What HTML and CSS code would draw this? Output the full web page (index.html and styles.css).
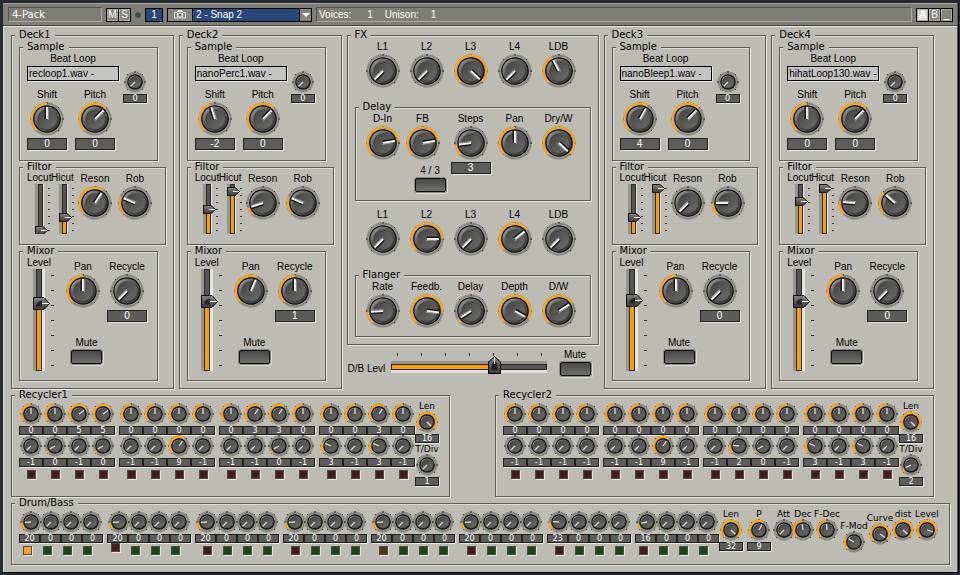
FILE: index.html
```
<!DOCTYPE html>
<html lang="en">
<head>
  <meta charset="UTF-8" />
  <meta name="viewport" content="width=device-width, initial-scale=1.0" />
  <title>4-Pack</title>
  <link rel="stylesheet" href="styles.css">
</head>
<body>
  <svg class="defs" aria-hidden="true">
    <defs>
      <linearGradient id="rim" x1="0" y1="0" x2="1" y2="1">
        <stop offset="0" stop-color="#b4b4b0" />
        <stop offset="0.35" stop-color="#606060" />
        <stop offset="1" stop-color="#303030" />
      </linearGradient>
      <linearGradient id="face" x1="0" y1="0" x2="1" y2="1">
        <stop offset="0" stop-color="#424242" />
        <stop offset="1" stop-color="#6c6c6a" />
      </linearGradient>
      <linearGradient id="cap" x1="0" y1="0" x2="0" y2="1">
        <stop offset="0" stop-color="#84847f" />
        <stop offset="1" stop-color="#3a3a3a" />
      </linearGradient>
    </defs>
  </svg>

  <main class="window">
    <header class="titlebar">
      <h1 class="title">4-Pack</h1>
      <div class="keys">
        <button class="key" type="button">M</button>
        <button class="key" type="button">S</button>
      </div>
      <span class="lamp"></span>
      <button class="slot" type="button">1</button>
      <div class="snapshot">
        <button class="camera" type="button" aria-label="Snapshot">
          <svg width="14" height="9" viewBox="0 0 14 9">
            <path d="M1.5 2.5H4V1.5H10V2.5H12.5V8H1.5Z" fill="#85847d" stroke="#e6e6e0" />
            <path d="M5 0.5H9M4.5 3V7M9.5 3V7" stroke="#e6e6e0" />
            <circle cx="7" cy="5" r="2" fill="#67675f" stroke="#e6e6e0" />
          </svg>
        </button>
        <select class="snap" aria-label="Snapshot name">
          <option>2 - Snap 2</option>
        </select>
        <span class="arrow">
          <svg width="8" height="4" viewBox="0 0 8 4"><path d="M0 0H8L4 4Z" fill="#fff" /></svg>
        </span>
      </div>
      <p class="status"><span>Voices:</span><span>1</span><span>Unison:</span><span>1</span></p>
      <div class="keys">
        <button class="key on" type="button">A</button>
        <button class="key" type="button">B</button>
        <button class="key" type="button">_</button>
      </div>
    </header>

    <div class="panel">
      <div class="decks" id="decks">
        <div class="center" id="center">
          <fieldset class="fx">
            <legend>FX</legend>
            <div class="knobs" id="fxSendA"></div>
            <fieldset class="delay">
              <legend>Delay</legend>
              <div class="knobs delay-knobs" id="delay"></div>
            </fieldset>
            <div class="knobs second" id="fxSendB"></div>
            <fieldset class="flanger">
              <legend>Flanger</legend>
              <div class="knobs" id="flanger"></div>
            </fieldset>
          </fieldset>
          <div class="master">
            <label for="dbLevel">D/B Levl</label>
            <div class="crossfader">
              <svg width="158" height="24" viewBox="0 0 158 24">
                <path d="M7.5 1v3M31.5 1v3M55.5 1v3M79.5 1v3M103.5 1v3M127.5 1v3M151.5 1v3" stroke="#333" />
                <rect x="1" y="9" width="156" height="3" fill="#95958c" />
                <rect x="1" y="18" width="156" height="3" fill="#e2e2dc" />
                <rect x="1.5" y="12.5" width="155" height="5" fill="#555553" stroke="#222" />
                <rect x="2" y="13" width="98" height="4" fill="#ff9c00" />
                <path d="M98.5 21.5V10L104.500 4.5L110.500 10V21.5Z" fill="url(#cap)" stroke="#000" />
                <path d="M101 18Q101 11 104.500 9Q108 11 108 18Z" fill="#222" />
                <path d="M104.500 5V12" stroke="#fff" />
              </svg>
              <input type="range" id="dbLevel" value="65">
            </div>
            <div class="mute">
              <label for="dbMute">Mute</label>
              <button class="pad" id="dbMute" type="button" aria-label="Mute"></button>
            </div>
          </div>
        </div>
      </div>

      <div class="recyclers" id="recyclers"></div>

      <fieldset class="drum">
        <legend>Drum/Bass</legend>
        <div class="drum-body">
          <div class="steps" id="drumSteps"></div>
          <div class="voice" id="voice"></div>
        </div>
      </fieldset>
    </div>
  </main>

  <script src="script.js"></script>
</body>
</html>
```
FILE: styles.css
```
* { margin: 0; padding: 0; box-sizing: border-box; }
body {
  font-family: "Liberation Sans", Arial, sans-serif;
  font-size: 10px;
  line-height: 12px;
  color: #000;
  background: #262b31;
  padding: 3px 2px 3px 3px;
}
button, input, select {
  font: inherit;
  color: inherit;
}
svg { display: block; }
.defs {
  position: absolute;
  width: 0;
  height: 0;
}
.window {
  background: #bdbcb4;
  border-right: 1px solid #55554f;
  box-shadow: 1px 1px 0 #000;
}

/* title bar */
.titlebar {
  display: flex;
  align-items: center;
  gap: 4px;
  height: 23px;
  padding: 0 4px 0 5px;
  color: #fff;
  background: #7e7d76;
  border-top: 1px solid #a9a8a1;
  border-bottom: 1px solid #44443f;
}
.title, .status {
  height: 15px;
  line-height: 13px;
  border: 1px solid #55554f;
  border-right-color: #a9a8a1;
  border-bottom-color: #a9a8a1;
}
.title {
  width: 94px;
  padding-left: 3px;
  font-family: "DejaVu Sans", sans-serif;
  font-size: 10px;
  font-weight: normal;
}
.status {
  flex: 1;
  display: flex;
  gap: 12px;
  padding-left: 2px;
}
.status span:nth-child(2) { margin: 0 0 0 4px; }
.keys {
  display: flex;
  gap: 1px;
  padding: 1px;
  background: #000;
}
.key {
  width: 11px;
  height: 12px;
  line-height: 10px;
  text-align: center;
  background: #85847d;
  border: 1px solid #a9a8a1;
}
.key.on { background: #dcdcdc; color: #fff; }
.lamp {
  width: 6px;
  height: 6px;
  border-radius: 3px;
  background: #2f4560;
  border: 1px solid #55554f;
}
.slot {
  width: 18px;
  height: 14px;
  line-height: 12px;
  background: #28477a;
  border: 1px solid #000;
}
.snapshot {
  display: flex;
  gap: 1px;
  height: 14px;
  padding: 1px;
  background: #000;
}
.camera {
  display: flex;
  align-items: center;
  justify-content: center;
  width: 24px;
  background: #85847d;
  border: 0;
}
.snap {
  appearance: none;
  width: 106px;
  padding-left: 3px;
  line-height: 12px;
  background: #28477a;
  border: 0;
  border-radius: 0;
}
.arrow {
  display: flex;
  align-items: center;
  justify-content: center;
  width: 11px;
  background: #85847d;
}

/* groups */
.panel {
  display: flex;
  flex-direction: column;
  gap: 1px;
  padding: 3px 7px 7px;
  border-top: 1px solid #e8e8e2;
  border-left: 1px solid #d6d6cf;
}
fieldset {
  min-width: 0;
  padding: 0 7px;
  border: 1px solid #5c5c57;
  box-shadow: 1px 1px 0 #e8e8e2, inset 1px 1px 0 #dcdcd5;
}
legend {
  margin-left: -4px;
  padding: 0 4px;
  font-family: "DejaVu Sans", sans-serif;
  line-height: 10px;
  background: #bdbcb4;
}
.decks {
  display: grid;
  grid-template-columns: 163fr 163fr 251fr 163fr 163fr;
  gap: 5px;
  padding-right: 16px;
}
.deck {
  display: flex;
  flex-direction: column;
  padding: 2px 7px 7px;
}
.sample, .mixer { margin-right: 8px; }
.filter, .mixer { margin-top: 1px; }

/* controls */
.knob {
  display: flex;
  flex-direction: column;
  align-items: center;
  width: 40px;
  white-space: nowrap;
}
.dial { position: relative; }
.dial input, .fader input, .crossfader input {
  position: absolute;
  inset: 0;
  width: 100%;
  height: 100%;
  opacity: 0;
}
.knob .dial { margin-top: 1px; }
output {
  display: block;
  width: 40px;
  height: 12px;
  line-height: 10px;
  text-align: center;
  color: #fff;
  background: #5c5c5a;
  border: 1px solid #222;
  box-shadow: 1px 1px 0 #e8e8e2;
}
.knob output { margin-top: 2px; }
.knob.small {
  width: 24px;
  font-family: "DejaVu Sans", sans-serif;
  font-size: 9px;
  line-height: 10px;
}
.knob.small .dial { margin-top: 0; }
.knob.small output, .values output {
  width: 24px;
  height: 9px;
  margin-top: 1px;
  font-family: "DejaVu Sans", sans-serif;
  font-size: 8px;
  line-height: 7px;
}
.pad {
  display: block;
  width: 31px;
  height: 14px;
  background: linear-gradient(#484848, #70706e);
  border: 1px solid #0c0c0c;
  border-radius: 2px;
  box-shadow: 0 0 0 1px #8b8b83, 1px 1px 0 1px #dcdcd5;
}
.mute {
  display: flex;
  flex-direction: column;
  align-items: center;
  gap: 1px;
  width: 31px;
  white-space: nowrap;
}
.fader {
  position: relative;
}
.fader label {
  display: block;
  white-space: nowrap;
}
.fader input {
  writing-mode: vertical-lr;
  direction: rtl;
}

/* deck sections */
.sample-body {
  display: flex;
  gap: 4px;
  height: 108px;
}
.sample-main { width: 92px; padding-top: 1px; }
.sample-main > label {
  display: block;
  text-align: center;
}
.file {
  display: block;
  width: 100%;
  height: 15px;
  margin: 1px 0 8px;
  padding-left: 1px;
  line-height: 12px;
  background: #c4c4c3;
  border: 1px solid #000;
  box-shadow: 1px 1px 0 #e8e8e2;
}
.pair {
  display: flex;
  gap: 8px;
}
.sample .small { margin-top: 19px; }
.filter-body {
  display: flex;
  height: 72px;
}
.filter-body .fader { width: 24px; }
.filter-body .knob { margin-top: 1px; }
.mixer-body {
  display: flex;
  height: 124px;
  padding-top: 1px;
}
.mixer-body .fader { width: 36px; }
.mixer-main { padding-top: 4px; }
.mixer-main .pair { gap: 4px; }
.mixer-main .mute { margin: 15px 0 0 8px; }

/* fx */
.fx { padding-bottom: 7px; }
.fx .knobs {
  display: flex;
  gap: 4px;
  padding: 1px 0 0 8px;
}
.fx fieldset .knobs { padding-left: 0; }
.delay, .flanger { margin-top: 14px; }
.delay { height: 99px; }
.flanger { height: 67px; }
.fx .second { padding-top: 8px; }
.fx .delay-knobs { gap: 0; }
.delay-knobs .knob { margin-right: 4px; }
.delay-knobs .knob:first-child { margin-right: 0; }
.feedback { width: 48px; }
.feedback .mute { margin: 5px 0 0 12px; }
.master {
  display: flex;
  align-items: flex-start;
  padding: 4px 8px 0 1px;
}
.master > label {
  width: 42px;
  padding-top: 14px;
  white-space: nowrap;
}
.crossfader {
  position: relative;
  flex: 1;
  padding-top: 3px;
}

/* step rows */
.recyclers {
  display: grid;
  grid-template-columns: 1fr 1fr;
  gap: 45px;
  padding-right: 16px;
}
.recycler { height: 107px; }
.recycler-body {
  display: flex;
  gap: 4px;
}
.group { padding-top: 3px; }
.dials, .values, .leds {
  display: grid;
  grid-template-columns: repeat(4, 24px);
  justify-items: center;
}
.recycler .length {
  margin-left: -4px;
  padding-top: 1px;
  display: flex;
  flex-direction: column;
  gap: 1px;
}
.led {
  width: 9px;
  height: 9px;
  appearance: none;
  background: #481c1e;
  border: 1px solid #4c4c47;
  box-shadow: 1px 1px 0 #e8e8e2;
}
.led.green { background: #1c461c; }
.led.olive { background: #483a18; }
.led.lit { background: #ffa028; }
.recycler .leds { margin-top: 3px; }
.drum { height: 67px; }
.drum-body { display: flex; }
.steps {
  display: flex;
  gap: 4px;
}
.steps .group { width: 84px; }
.steps .dials {
  grid-template-columns: repeat(4, 20px);
  padding: 0 2px;
}
.steps .values { grid-template-columns: repeat(4, 21px); }
.steps .values output { width: 21px; }
.steps .leds {
  grid-template-columns: repeat(3, 20px) 1fr;
  justify-items: start;
  align-items: end;
  height: 12px;
  padding-left: 8px;
}
.steps .near { padding-left: 4px; }
.steps .raised { align-self: start; }
.voice {
  display: grid;
  grid-template-columns: 24px 32px 17px 22px 26px 28px 24px 22px 26px;
  justify-items: center;
  align-items: start;
  padding-top: 1px;
}
.voice .mid { padding-top: 4px; }
.voice .low { padding-top: 12px; }
```
FILE: script.js
```
let uid = 0;

function point(c, r, deg) {
  const a = (deg - 90) * Math.PI / 180;
  return (c + r * Math.cos(a)).toFixed(2) + ' ' + (c + r * Math.sin(a)).toFixed(2);
}

function arc(c, r, from, to) {
  return `M${point(c, r, from)}A${r} ${r} 0 ${to - from > 180 ? 1 : 0} 1 ${point(c, r, to)}`;
}

// every knob turns from -135 to 135 degrees, 0 is straight up
function dial(angle, small, name) {
  const c = small ? 11 : 17;
  const r = small ? 9.3 : 15.4;
  let s = `<svg width="${c * 2}" height="${c * 2}" viewBox="0 0 ${c * 2} ${c * 2}">`;
  s += `<circle cx="${c}" cy="${c}" r="${r + 1.4}" fill="#a5a59c"/>`;
  s += `<circle cx="${c}" cy="${c}" r="${r}" fill="none" stroke="#8b8b83" stroke-width="2"/>`;
  [-135, -90, -45, 0, 45, 90, 135].forEach(t => {
    const from = t % 90 ? r + 0.6 : r;
    s += `<path d="M${point(c, from, t)}L${point(c, r + 1.6, t)}" stroke="#111"/>`;
  });
  if (angle > -130) {
    s += `<path d="${arc(c, r, -138, angle)}" fill="none" stroke="#ffa616" stroke-width="2.200"/>`;
  }
  const body = small ? 7.8 : 13.8;
  s += `<circle cx="${c}" cy="${c}" r="${body}" fill="#0c0c0c"/>`;
  s += `<circle cx="${c}" cy="${c}" r="${body - 1.2}" fill="url(#rim)"/>`;
  s += `<circle cx="${c}" cy="${c}" r="${small ? 5.8 : 10}" fill="url(#face)"/>`;
  if (small) {
    s += `<path d="M${point(c, 0, 0)}L${point(c, 6, angle)}" stroke="#deded8" stroke-width="1.300"/>`;
  } else {
    s += `<g transform="rotate(${angle} 17 17)"><path d="M15.300 17V5" stroke="#151515" stroke-width="1.600"/>` +
      '<path d="M17 17V5" stroke="#f4f4f0" stroke-width="2"/><path d="M18.300 18V7" stroke="#999" stroke-width="1"/></g>';
  }
  return `<span class="dial">${s}</svg><input type="range" min="-135" max="135" value="${angle}" aria-label="${name}"></span>`;
}

function knob(name, angle, value, cls = '') {
  const small = cls.includes('small');
  const text = name ? `<span>${name}</span>` : '';
  const out = value === undefined ? '' : `<output>${value}</output>`;
  return `<label class="knob ${cls}">${text}${dial(angle, small, name || 'Start')}${out}</label>`;
}

function mute(name) {
  const id = 'pad' + uid++;
  return `<div class="mute"><label for="${id}">${name}</label><button class="pad" id="${id}" type="button" aria-label="${name}"></button></div>`;
}

function fader(name, value, big) {
  const id = 'fader' + uid++;
  const x = big ? 6 : 8;
  const h = big ? 102 : 50;
  const w = big ? 4 : 3;
  const first = big ? 6 : 4;
  const step = big ? 15 : 7;
  const y = first + step * 6 * (100 - value) / 100;
  const top = Math.round(y) + 0.5;
  let s = `<rect x="${x}" width="3" height="${h}" fill="#96968d"/>`;
  s += `<rect x="${x + w + 5}" width="1" height="${h}" fill="#e6e6e0"/>`;
  s += `<rect x="${x + 3.5}" y="0.5" width="${w + 1}" height="${h - 1}" fill="#555553" stroke="#2a2a28"/>`;
  s += `<rect x="${x + 4}" y="${top}" width="${w}" height="${h - 1 - top}" fill="#ff9c00"/>`;
  if (big) s += `<rect x="${x + 10}" width="2" height="${h}" fill="#e6e6e0"/>`;
  for (let i = 0; i < 7; i++) {
    s += `<path d="M${big ? 24 : 21} ${first + i * step + 0.5}h${big ? 3 : 2}" stroke="#333"/>`;
  }
  if (value < 3) s += `<rect x="${x + 4}" y="1" width="${w}" height="${h - 2}" fill="#555553"/>`;
  if (big) {
    s += `<path d="M6.5 ${top - 6}H17L22.500 ${top}L17 ${top + 6}H6.5Z" fill="url(#cap)" stroke="#111"/>` +
      `<path d="M9 ${top + 3}Q9 ${top - 2} 15 ${top - 3}V${top + 3}Z" fill="#262626"/><path d="M15 ${top}H22" stroke="#fff"/>`;
  } else {
    s += `<path d="M8.5 ${top - 4}H16L20.500 ${top}L16 ${top + 4}H8.5Z" fill="url(#cap)" stroke="#111"/>` +
      `<path d="M14 ${top}H20" stroke="#fff"/>`;
  }
  return `<div class="fader"><label for="${id}">${name}</label><svg width="${big ? 30 : 24}" height="${h}">${s}</svg><input type="range" id="${id}" value="${value}"></div>`;
}

const decks = [
  { file: 'recloop1.wav -', shift: [0, 0], locut: 0, hicut: 31, reson: 33, rob: -67, level: 69, pan: 0, recycle: [-135, 0] },
  { file: 'nanoPerc1.wav -', shift: [-17, -2], locut: 49, hicut: 93, reson: -108, rob: -67, level: 71, pan: 23, recycle: [0, 1] },
  { file: 'nanoBleep1.wav -', shift: [30, 4], locut: 32, hicut: 100, reson: -135, rob: -90, level: 72, pan: 0, recycle: [-135, 0] },
  { file: 'hihatLoop130.wav -', shift: [0, 0], locut: 68, hicut: 100, reson: -85, rob: -48, level: 71, pan: 0, recycle: [-135, 0] }
];

function deck(d, i) {
  return `<fieldset class="deck"><legend>Deck${i + 1}</legend>
    <fieldset class="sample"><legend>Sample</legend><div class="sample-body">
      <div class="sample-main">
        <label for="file${i}">Beat Loop</label>
        <input class="file" id="file${i}" type="text" value="${d.file}">
        <div class="pair">${knob('Shift', d.shift[0], d.shift[1])}${knob('Pitch', 45, 0)}</div>
      </div>
      ${knob('', -135, 0, 'small')}
    </div></fieldset>
    <fieldset class="filter"><legend>Filtor</legend><div class="filter-body">
      ${fader('Locut', d.locut)}${fader('Hicut', d.hicut)}${knob('Reson', d.reson)}${knob('Rob', d.rob)}
    </div></fieldset>
    <fieldset class="mixer"><legend>Mixor</legend><div class="mixer-body">
      ${fader('Level', d.level, true)}
      <div class="mixer-main">
        <div class="pair">${knob('Pan', d.pan)}${knob('Recycle', ...d.recycle)}</div>
        ${mute('Mute')}
      </div>
    </div></fieldset>
  </fieldset>`;
}

const center = document.getElementById('center');
center.insertAdjacentHTML('beforebegin', decks.slice(0, 2).map(deck).join(''));
center.insertAdjacentHTML('afterend', decks.slice(2).map((d, i) => deck(d, i + 2)).join(''));

function fill(id, html) {
  document.getElementById(id).innerHTML = html;
}

const sends = ['L1', 'L2', 'L3', 'L4', 'LDB'];
fill('fxSendA', [-135, -135, 133, -135, -27].map((a, i) => knob(sends[i], a)).join(''));
fill('fxSendB', [-135, 90, -135, 52, -135].map((a, i) => knob(sends[i], a)).join(''));
fill('delay', knob('D-In', 80) + `<div class="feedback">${knob('FB', 80)}${mute('4 / 3')}</div>` +
  knob('Steps', -97, 3) + knob('Pan', 0) + knob('Dry/W', 133));
fill('flanger', knob('Rate', -93) + knob('Feedb.', 97) + knob('Delay', -122) + knob('Depth', 120) + knob('D/W', 58));

function dialRow(angles, name) {
  return `<div class="dials">${angles.map((a, i) => dial(a, true, name + ' ' + (i + 1))).join('')}</div>`;
}

function valueRow(values) {
  return `<div class="values">${values.map(v => `<output>${v}</output>`).join('')}</div>`;
}

function led(cls) {
  return `<input type="checkbox" class="led ${cls}" aria-label="Step">`;
}

const recyclers = [
  {
    pitch: [[0, 0, 5, 5], [0, 0, 0, 0], [0, 3, 3, 0], [0, 0, 3, 0]],
    slice: [[-1, 0, -1, 0], [-1, -1, 9, -1], [-1, -1, 0, -1], [3, -1, 3, -1]],
    div: [-135, 1]
  },
  {
    pitch: [[0, 0, 0, 0], [0, 0, 0, 0], [0, 0, 0, 0], [0, 0, 0, 0]],
    slice: [[-1, -1, -1, -1], [-1, -1, 9, -1], [-1, 2, 0, -1], [3, -1, 3, -1]],
    div: [-115, 2]
  }
];

fill('recyclers', recyclers.map((r, n) => {
  const groups = r.pitch.map((p, g) => `<div class="group">
    ${dialRow(p.map(v => v * 11), 'Pitch')}${valueRow(p)}
    ${dialRow(r.slice[g].map(v => v * 17 - 118), 'Slice')}${valueRow(r.slice[g])}
    <div class="leds">${led('').repeat(4)}</div></div>`).join('');
  return `<fieldset class="recycler"><legend>Recycler${n + 1}</legend><div class="recycler-body">${groups}
    <div class="length">${knob('Len', 135, 16, 'small')}${knob('T/Div', r.div[0], r.div[1], 'small')}</div></div></fieldset>`;
}).join(''));

const drum = [
  [20, -93, 'lit', 'near'], [20, -93, 'raised', 'near'], [20, -93, '', ''], [20, -93, '', ''],
  [20, -93, 'olive', ''], [20, -93, '', ''], [23, -87, '', ''], [16, -100, '', 'near']
];

fill('drumSteps', drum.map(d => `<div class="group">
  ${dialRow([d[1], -135, -135, -135], 'Drum')}${valueRow([d[0], 0, 0, 0])}
  <div class="leds ${d[3]}">${led(d[2])}${led('green').repeat(3)}</div></div>`).join(''));

fill('voice', knob('Len', 135, 32, 'small') + knob('P', 30, 9, 'small') + knob('Att', -135, undefined, 'small') +
  knob('Dec', -8, undefined, 'small') + knob('F-Dec', -4, undefined, 'small') + knob('F-Mod', -60, undefined, 'small low') +
  knob('Curve', 125, undefined, 'small mid') + knob('dist', 133, undefined, 'small') + knob('Level', 107, undefined, 'small'));
```
